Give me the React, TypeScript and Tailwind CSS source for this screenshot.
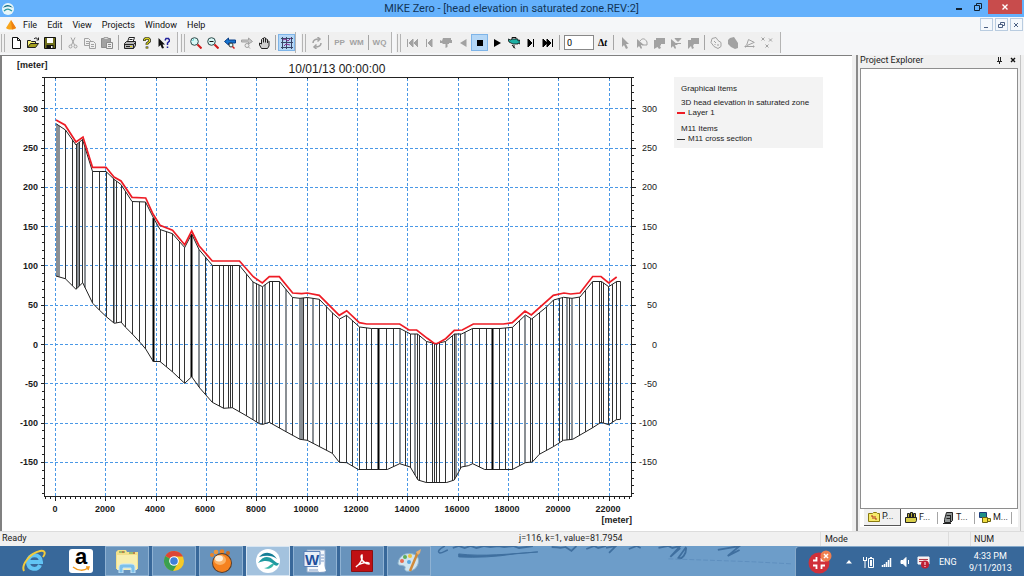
import React from 'react';
import clsx from 'clsx';

type Point = [number, number];

const LAYER_LINE: Point[] = [
  [56, 120], [65, 125], [76, 142], [83, 137], [92.5, 167.3], [106, 167.3], [114, 177], [121, 181], [132, 197.3],
  [145.7, 198], [153, 214], [160, 225.3], [172.5, 230.3], [184.7, 244.7], [191.7, 231], [199, 245.7], [212.3, 261],
  [239.5, 261], [253.3, 276.7], [262.3, 283], [269.3, 276.7], [279.3, 276.7], [292.7, 293], [301.7, 293.7],
  [307.3, 293], [319.3, 295.3], [339.3, 315.3], [346.7, 310.7], [359.3, 322.7], [366.7, 324], [399.7, 324],
  [409, 330], [416.7, 330], [427.3, 338.3], [434.3, 343.5], [437.3, 343.5], [445.7, 338.7], [454.3, 330.3],
  [462.3, 330], [473.3, 324], [503.3, 324], [512.3, 322.7], [525, 311], [531.3, 315], [553.3, 295.3], [564, 293],
  [570.7, 294], [580, 293], [592.7, 276.5], [601, 276.5], [608.7, 283], [616.7, 277],
];

const SECTION_TOP: Point[] = [
  [56, 123.7], [65.5, 130], [76, 145], [82.5, 139.5], [92.5, 171.5], [106, 171.5], [114.3, 179.5], [121, 184.5],
  [132, 201.5], [145.5, 202], [153.5, 218], [160, 229.5], [172.5, 233.7], [184.7, 247.5], [191.7, 234], [199, 249.5],
  [212.5, 265.5], [239.5, 265.5], [253, 282], [262.5, 286.7], [269.5, 281.5], [279.5, 281.5], [292.5, 297.5],
  [300, 298.3], [307.3, 297.5], [319.3, 299.3], [332.5, 313], [339.5, 319], [346.5, 315.3], [359.5, 327],
  [371.5, 328.5], [400, 328.5], [410.5, 334], [417.5, 334], [426.5, 341.5], [435.5, 343.7], [445.5, 341.5],
  [454.5, 334], [461.5, 334], [472.5, 328.5], [500, 328.5], [512.5, 327.3], [525.5, 315], [531.7, 319], [546.5, 307],
  [553.5, 300], [563.5, 297.3], [572, 298.3], [580, 297], [592.7, 281.5], [601.5, 281.5], [608.7, 286.7],
  [616.7, 281.5], [620.5, 281.5],
];

const SECTION_BOTTOM: Point[] = [
  [56, 276], [65.3, 278.7], [76, 289.3], [82.7, 282.7], [92.7, 303.3], [99.3, 310], [106.3, 316.7], [114.3, 323.3],
  [121, 322], [125.3, 327], [132, 333.7], [140, 342.3], [145.7, 349], [153.3, 361.5], [160, 361.5], [172.3, 371.7],
  [184.7, 383.3], [191.7, 376.7], [200, 388.3], [212.3, 402.3], [223.7, 408.3], [232.3, 407.7], [246.3, 415.7],
  [260, 424], [263, 424.3], [269.3, 422.3], [286, 431.7], [300, 439.3], [307.3, 440.3], [332.3, 453.3],
  [339.3, 462.3], [346.7, 462.7], [358.3, 469.5], [387.3, 469.5], [399.7, 463.7], [410.3, 467], [418, 480],
  [426.3, 482.5], [446.7, 482.5], [454.3, 480], [461.3, 467], [468.3, 465.7], [472.7, 463.7], [484.7, 469.5],
  [512.3, 469.5], [525.3, 462.7], [532.3, 462], [539.3, 454.3], [553.3, 446.7], [563.3, 440.3], [572.7, 439.3],
  [592.7, 427.7], [601, 422.3], [608.7, 424.7], [616.3, 419.7], [620.5, 419.3],
];

const THIN = [
  65.5, 72.5, 76.5, 79.5, 82.5, 92.5, 99.5, 106.5, 113.5, 116.5, 121.5, 125.5, 132.5, 139.5, 145.5, 160.5, 166.5,
  172.5, 179.5, 184.5, 205.5, 212.5, 219.5, 223.5, 228.5, 230.5, 232.5, 239.5, 246.5, 256.5, 262.5, 269.5, 272.5,
  279.5, 292.5, 303.5, 307.5, 319.5, 326.5, 332.5, 339.5, 346.5, 352.5, 359.5, 366.5, 371.5, 386.5, 393.5, 405.5,
  410.5, 417.5, 419.5, 426.5, 432.5, 434.5, 436.5, 439.5, 445.5, 452.5, 454.5, 460.5, 472.5, 479.5, 486.5, 499.5,
  505.5, 512.5, 519.5, 530.5, 532.5, 539.5, 546.5, 553.5, 559.5, 562.5, 569.5, 579.5, 585.5, 592.5, 599.5, 601.5,
  603.5, 608.5, 612.5, 616.5, 620.5,
];
const SOFT = [57, 59, 78, 85, 114, 199, 253, 259, 265, 286, 300, 302, 313, 400, 415, 456, 465, 525, 567, 572];
const THICK = [153.5, 191.5, 378.5, 492.5];

const X_VALUES = [0, 2000, 4000, 6000, 8000, 10000, 12000, 14000, 16000, 18000, 20000, 22000];
const Y_VALUES = [300, 250, 200, 150, 100, 50, 0, -50, -100, -150];

const toX = (v: number) => 55.5 + v * 0.02516;
const toY = (v: number) => 344.5 - v * 0.786;
const snap = (n: number) => Math.floor(n) + 0.5;

const heightAt = (line: Point[], x: number) => {
  const i = Math.max(1, line.findIndex((p) => p[0] >= x));
  const [x0, y0] = line[i - 1];
  const [x1, y1] = line[i];
  return y0 + ((x - x0) / (x1 - x0)) * (y1 - y0);
};

const toPoints = (line: Point[]) => line.map((p) => p.join(',')).join(' ');

const bars = (xs: number[]) =>
  xs.map((x) => `M${x} ${heightAt(SECTION_TOP, x)}V${heightAt(SECTION_BOTTOM, x)}`).join('');

const Chart: React.FC = () => {
  const minorX = Array.from({ length: 117 }, (_, i) => -400 + i * 200).filter((v) => toX(v) < 631);
  const minorY = Array.from({ length: 53 }, (_, i) => 330 - i * 10).filter((v) => toY(v) < 496);
  return (
    <svg
      viewBox="2 56 664 474"
      className="h-auto w-full font-['Liberation_Sans',Arial,sans-serif]"
      role="img"
      aria-label="Head elevation in saturated zone"
    >
      <g stroke="#4a98e6" strokeDasharray="3 2">
        {X_VALUES.map((v) => (
          <path key={v} d={`M${snap(toX(v))} 78V496`} />
        ))}
        {Y_VALUES.map((v) => (
          <path key={v} d={`M45 ${snap(toY(v))}H631`} />
        ))}
      </g>

      <path d={bars(SOFT)} stroke="#8a8f94" strokeWidth="2" />
      <path d={bars(THIN)} stroke="#333" />
      <path d={bars(THICK)} stroke="#000" strokeWidth="2" />
      <polyline points={toPoints(SECTION_TOP)} fill="none" stroke="#222" />
      <polyline points={toPoints(SECTION_BOTTOM)} fill="none" stroke="#222" />
      <polyline points={toPoints(LAYER_LINE)} fill="none" stroke="#ee1c25" strokeWidth="1.7" />

      <g stroke="#222">
        <path d="M42 77.5H634M44.5 77V497M631.5 77V497M44 496.5H632" />
        <path d={minorY.map((v) => `M42 ${snap(toY(v))}h2M632 ${snap(toY(v))}h2`).join('')} />
        <path d={Y_VALUES.map((v) => `M41 ${snap(toY(v))}h4M632 ${snap(toY(v))}h4`).join('')} />
        <path d={minorX.map((v) => `M${snap(toX(v))} 497v2`).join('')} />
        <path d={X_VALUES.map((v) => `M${snap(toX(v))} 497v4M${snap(toX(v))} 78v1`).join('')} />
      </g>

      <g fontSize="9" fill="#1a1a1a">
        <g fontWeight="bold">
          <text x="17" y="68">[meter]</text>
          <text x="632" y="523" textAnchor="end">[meter]</text>
          {Y_VALUES.map((v) => (
            <text key={v} x="38" y={Math.round(toY(v)) + 3} textAnchor="end">{v}</text>
          ))}
          {X_VALUES.map((v) => (
            <text key={v} x={Math.round(toX(v)) - 1} y="512" textAnchor="middle">{v}</text>
          ))}
        </g>
        {Y_VALUES.map((v) => (
          <text key={v} x="657" y={Math.round(toY(v)) + 3} textAnchor="end">{v}</text>
        ))}
      </g>
      <text x="337" y="73" fontSize="12" fill="#1a1a1a" textAnchor="middle">10/01/13 00:00:00</text>
    </svg>
  );
};

const Legend: React.FC = () => (
  <div className="mt-[21px] mr-[29px] ml-2 h-[71px] w-[149px] shrink-0 bg-[#f3f3f3] pt-[7px] pl-[7px] font-['Liberation_Sans',Arial,sans-serif] text-[8px] leading-[10px] whitespace-nowrap text-[#222]">
    <p>Graphical Items</p>
    <p className="mt-1">3D head elevation in saturated zone</p>
    <p className="-ml-1 flex items-center gap-[3px]">
      <span className="h-[2px] w-2 bg-[#ee1c25]" />
      Layer 1
    </p>
    <p className="mt-1.5">M11 Items</p>
    <p className="-ml-1 flex items-center gap-[3px]">
      <span className="h-px w-2 bg-[#333]" />
      M11 cross section
    </p>
  </div>
);

const G = '#a2a2a2';

const ICONS: Record<string, React.ReactNode> = {
  New: <path d="M2.5.5h5l3 3v8h-8zM7.500.5v3h3" fill="#fff" stroke="#111" />,
  Open: (
    <>
      <path d="M.5 10.500v-7h3l1 1h4v2" fill="#f4ef7a" stroke="#222" />
      <path d="M.5 10.500l3-4h8l-3 4z" fill="#a5a020" stroke="#222" />
      <path d="M7 2c1-1.500 3-1.500 4 .5M11.500.5v2.500h-2" fill="none" stroke="#222" />
    </>
  ),
  Save: (
    <>
      <path d="M.5.5h11v11h-11z" fill="#70701c" stroke="#111" />
      <path d="M3 1h6v5H3z" fill="#fff" />
      <path d="M2.500 8h7v3.500h-7z" fill="#111" />
      <path d="M7 9h1.500v2H7z" fill="#fff" />
    </>
  ),
  Cut: (
    <g fill="none" stroke={G}>
      <path d="M4 .5l3.500 7.500M8 .5L4.500 8" />
      <circle cx="3.500" cy="9.500" r="1.500" />
      <circle cx="8.500" cy="9.500" r="1.500" />
    </g>
  ),
  Copy: (
    <g fill="#f0f0f0" stroke={G}>
      <path d="M.5 1.500h4l2 2v5h-6zM2 4.500h3M2 6.500h3" />
      <path d="M5.500 4.500h4l2 2v5h-6zM7 7.500h3M7 9.500h3" />
    </g>
  ),
  Paste: (
    <g>
      <path d="M.5 1.500h9v9h-9z" fill={G} stroke="#8d8d8d" />
      <path d="M3 .5h4v2H3z" fill="#ddd" stroke={G} />
      <path d="M5.500 5.500h6v6h-6zM7 7.500h3M7 9.500h3" fill="#eee" stroke="#8d8d8d" />
    </g>
  ),
  Print: (
    <g stroke="#222">
      <path d="M3.500 5l1.500-4.500h5.500L9 5" fill="#fff" />
      <path d="M.5 6.500l2-2h9v4l-2 3h-9z" fill="#b5b5b5" />
      <path d="M.5 7.500h9l2-2M9.500 7.500v4M5.500 2.500h3M2 9.500h4" fill="none" />
      <path d="M6 9.500h2" stroke="#d8d000" />
    </g>
  ),
  Help: (
    <g fill="none">
      <path d="M3.500 4V2.500l1-1h3l1 1v2l-2.500 2V8M6 9.500v2" stroke="#111" strokeWidth="2.600" />
      <path d="M3.500 3.500v-1l1-1h3l1 1v2L6 6.500V8M6 10v1.500" stroke="#d9d420" strokeWidth="1.3" />
    </g>
  ),
  'What is this': (
    <g>
      <path d="M.5 1v9l2-2 1.500 3.500L6 11 4.500 7.500H7z" fill="#111" />
      <path d="M7 3.500l1-2h2.500l1 1.500v1L9.500 6v2M9.500 9.500v1.500" fill="none" stroke="#22229a" strokeWidth="1.500" />
    </g>
  ),
  'Zoom in': (
    <g>
      <circle cx="4.500" cy="4.500" r="3.800" fill="#d9f8f6" stroke="#2c4a4a" />
      <path d="M2.500 3.500l1.500-1" stroke="#29c7c7" />
      <path d="M7.500 7.500l4 4" stroke="#d01a1a" strokeWidth="2" />
    </g>
  ),
  'Zoom out': (
    <g>
      <circle cx="4.500" cy="4.500" r="3.800" fill="#d9f8f6" stroke="#2c4a4a" />
      <path d="M2.500 4.500h4" stroke="#111" />
      <path d="M7.500 7.500l4 4" stroke="#d01a1a" strokeWidth="2" />
    </g>
  ),
  'Previous zoom': (
    <g>
      <path d="M.5 4.500L4.500 1v2h7v3h-7v2z" fill="#1675d0" stroke="#0b3f86" />
      <circle cx="7" cy="8" r="2" fill="#dff" stroke="#333" />
      <path d="M8.500 9.500l2 2" stroke="#d01a1a" strokeWidth="1.500" />
    </g>
  ),
  'Next zoom': (
    <g stroke={G}>
      <path d="M11.500 4.500L7.500 1v2h-7v2h7v2z" fill="#c8c8c8" />
      <circle cx="6" cy="8.500" r="2" fill="#eee" />
      <path d="M7.500 10l1.500 1.500" />
    </g>
  ),
  Pan: (
    <path
      d="M3.500 11.500L1.500 8V6l2 1V2.500l1-1 1 1V1l1-.5 1 .5v1.500l1-.5 1 .5v1.500l1 0 .5.500V9l-1.500 2.500zM5.500 2v3.500M7.500 2v3.500M9.500 3.500v2.500"
      fill="#d0d0d0"
      stroke="#222"
    />
  ),
  Grid: (
    <g fill="none">
      <path d="M1.500 0v12M5.500 0v12M10.500 0v12M0 1.500h12M0 5.500h12M0 10.500h12" stroke="#3a4668" />
      <path d="M2 3l2-1 3 2 3-3M3 9l2-2 4 1" stroke="#8a2d90" />
    </g>
  ),
  Refresh: (
    <g fill="none" stroke={G} strokeWidth="1.500">
      <path d="M2 6c0-3 2-4 6-4M10 6c0 3-2 4-6 4" />
      <path d="M6.500 0L9 2 6.500 4.500M5.500 7.500L3 10l2.500 2" />
    </g>
  ),
  First: <path d="M1.500 2v8M7 2L3 6l4 4zM12 2L8 6l4 4z" fill={G} stroke={G} />,
  'Step back': <path d="M3.500 2v8M9 2L5 6l4 4z" fill={G} stroke={G} />,
  'Reverse record': <path d="M0 3l2 1 1-3h8v2h1v3H9v1H7.500v3l-2 1V7H3L2 6H0z" fill={G} />,
  Back: <path d="M9.500 2v8L3 6z" fill={G} />,
  Stop: <path d="M3 3h6v6H3z" fill="#000" />,
  Play: <path d="M3 2v8l7-4z" fill="#000" />,
  Record: (
    <g>
      <path d="M0 2l3 1 1-1h6v2l2-1v4l-2-1v1H5L3 6 1 5z" fill="#1fb0a4" stroke="#111" strokeWidth=".8" />
      <path d="M4 2V.5h4V2M6 8v3M4 8l3 3.500" fill="none" stroke="#111" />
    </g>
  ),
  Step: <path d="M8.500 2v8M3 2l4 4-4 4z" fill="#000" stroke="#000" />,
  Last: <path d="M10.500 2v8M1 2l4 4-4 4zM5 2l4 4-4 4z" fill="#000" stroke="#000" />,
  Select: <path d="M3 0v10l2-2 2 4 2-1-2-4h3z" fill={G} />,
  'Select shape': (
    <g>
      <path d="M1 2v9l2-2 2 3 1-1-1-3h3z" fill={G} />
      <path d="M4 4c2-3 5-3 7 1l0 3H6" fill="none" stroke={G} />
    </g>
  ),
  'Select area': <path d="M3 1h9v6H8v1L7 9l1 2-2 1-1.500-2L1 12V3h2z" fill={G} />,
  'Select below': (
    <g>
      <path d="M1 2v9l2-2 2 3 1-1-1-3h3z" fill={G} />
      <path d="M5 1.500h6l-3 3zM6 6.500h5" fill={G} stroke={G} />
    </g>
  ),
  'Select block': <path d="M4 1h8v6H7l-1 2 1 2-2 1-1-3-3 3V3h3z" fill={G} />,
  Polygon: (
    <g fill="none" stroke={G}>
      <path d="M2 1.500l4-1 2 3 3 2v4l-3 2-4-2-3-4zM4 4l2 2M7 8h2M4.500 7.500h1" />
    </g>
  ),
  'Fill polygon': <path d="M3 1l4-1 2 3 2 3v5l-3 1-4-2-3-3V3z" fill={G} />,
  'Edit line': (
    <g fill="none" stroke={G}>
      <path d="M1.500 9.500h8M2.500 8.500l2-6M4.500 2.500l6 3M3 8.500l7-3" />
      <path d="M1 9h1v1H1zM9 9h1v1H9z" fill={G} />
    </g>
  ),
  'Delete points': <path d="M.5.5l3 3m0-3l-3 3M8 1.500l3 3m0-3l-3 3M4.500 7.500l3 3m0-3l-3 3" stroke={G} fill="none" />,
};

const Tool: React.FC<{ name: string; active?: boolean }> = ({ name, active }) => (
  <button
    aria-label={name}
    className={clsx(
      'flex h-[17px] w-[17px] shrink-0 items-center justify-center',
      active && 'border border-[#7eb4e8] bg-[#b5d7f6]'
    )}
  >
    <svg viewBox="0 0 12 12" className="h-3 w-3 shrink-0">{ICONS[name]}</svg>
  </button>
);

const ModeTool: React.FC<{ label: string }> = ({ label }) => (
  <button className="w-[17px] shrink-0 text-center font-['Liberation_Sans',sans-serif] text-[8px] font-bold text-[#a2a2a2]">
    {label}
  </button>
);

const Sep = () => (
  <span className="flex w-[6px] shrink-0 justify-center">
    <span className="h-[15px] w-px bg-[#a5a5a5]" />
  </span>
);

const Band: React.FC<{ className?: string; children: React.ReactNode }> = ({ className, children }) => (
  <div className={clsx('flex h-[21px] shrink-0 items-center border-r border-[#b4b4b4] bg-[#f0f0f0]', className)}>
    <span className="mr-0.5 ml-px h-[18px] w-1 shrink-0 border-x border-[#b4b4b4]" />
    {children}
  </div>
);

const tools = (names: string[]) => names.map((n) => <Tool key={n} name={n} />);

const TitleBar: React.FC = () => (
  <header className="flex h-[17px] items-start bg-[#64b1fc]">
    <svg viewBox="0 0 12 12" className="mt-[3px] ml-0.5 h-3 w-3">
      <circle cx="6" cy="6" r="6" fill="#e8f6f8" />
      <path d="M1 5c2-4 7-4 10 0-4-2-6-2-10 0z" fill="#146f86" />
      <path d="M2 8c3-3 5-2 8 0" fill="none" stroke="#2a9aa0" strokeWidth="1.200" />
    </svg>
    <h1 className="flex-1 pl-[60px] text-center text-[11px] leading-[17px] text-[#123456]">
      MIKE Zero - [head elevation in saturated zone.REV:2]
    </h1>
    <button aria-label="Minimize" className="flex h-[14px] w-[19px] items-center justify-center">
      <span className="mt-1 h-0.5 w-1.5 bg-[#123]" />
    </button>
    <button aria-label="Restore" className="flex h-[14px] w-[20px] items-center justify-center">
      <svg viewBox="0 0 8 8" className="h-2 w-2" fill="none" stroke="#123">
        <path d="M2.500 2V.500h5v5H6M.5 2.500h5v5h-5z" />
      </svg>
    </button>
    <button aria-label="Close" className="mr-0.5 flex h-[14px] w-[34px] items-center justify-center bg-[#c84c4c]">
      <svg viewBox="0 0 6 6" className="h-1.5 w-1.5" stroke="#fff" strokeWidth="1.400">
        <path d="M.5.5l5 5m0-5l-5 5" />
      </svg>
    </button>
  </header>
);

const MENUS = ['File', 'Edit', 'View', 'Projects', 'Window', 'Help'];
const WINDOW_BUTTONS = [
  { name: 'Minimize document', d: 'M1 5.500h4' },
  { name: 'Restore document', d: 'M2.500 2V.500h4v3H5M.5 2.500h4v3h-4z' },
  { name: 'Close document', d: 'M1 1l4 4m0-4l-4 4' },
];

const MenuBar: React.FC = () => (
  <nav className="flex h-[15px] items-center bg-[#f5f7f9] text-[9px] leading-[12px] text-[#111]">
    <svg viewBox="0 0 10 10" className="mr-[7px] ml-1.5 h-2.5 w-2.5">
      <path d="M5 0l5 8c-2 2-8 2-10 0z" fill="#f7a51c" />
      <path d="M5 0l5 8-4 1.500z" fill="#ee7f10" />
    </svg>
    <div className="flex flex-1 gap-[10px]">
      {MENUS.map((m) => (
        <button key={m}>{m}</button>
      ))}
    </div>
    <div className="flex gap-0.5 pr-px">
      {WINDOW_BUTTONS.map((b) => (
        <button
          key={b.name}
          aria-label={b.name}
          className="flex h-[13px] w-[13px] items-center justify-center border border-[#b9cce0] bg-[#f4f8fc]"
        >
          <svg viewBox="0 0 7 6" className="h-1.5 w-[7px]" fill="none" stroke="#4a5f82">
            <path d={b.d} />
          </svg>
        </button>
      ))}
    </div>
  </nav>
);

const Toolbar: React.FC = () => (
  <div className="flex h-[23px] items-start overflow-hidden bg-[#f5f6f8]">
    <Band className="mr-[2px] pr-[5px]">
      {tools(['New', 'Open', 'Save'])}
      <Sep />
      {tools(['Cut', 'Copy', 'Paste'])}
      <Sep />
      {tools(['Print', 'Help', 'What is this'])}
    </Band>
    <Band className="mr-[5px]">
      {tools(['Zoom in', 'Zoom out', 'Previous zoom', 'Next zoom', 'Pan'])}
      <Sep />
      <Tool name="Grid" active />
    </Band>
    <Band className="mr-[4px] pr-[3px]">
      <Tool name="Refresh" />
      <Sep />
      <ModeTool label="PP" />
      <ModeTool label="WM" />
      <Sep />
      <ModeTool label="WQ" />
    </Band>
    <Band className="pr-[5px]">
      {tools(['First', 'Step back', 'Reverse record', 'Back'])}
      <Tool name="Stop" active />
      {tools(['Play', 'Record', 'Step', 'Last'])}
      <Sep />
      <input
        aria-label="Time step"
        defaultValue="0"
        className="mr-px ml-0.5 h-[15px] w-[30px] border border-[#888] bg-white px-0.5 text-[9px] leading-none"
      />
      <button className="w-[15px] shrink-0 text-center font-['Liberation_Serif',serif] text-[10px] font-bold text-black">
        Δ<i>t</i>
      </button>
      <Sep />
      {tools(['Select', 'Select shape', 'Select area', 'Select below', 'Select block'])}
      <Sep />
      {tools(['Polygon', 'Fill polygon', 'Edit line', 'Delete points'])}
    </Band>
  </div>
);

const EXPLORER_TABS = [
  {
    label: 'P...',
    icon: (
      <g>
        <path d="M.5 2.500h4l1-1h3l1 1h2v8H.500z" fill="#f6ea6a" stroke="#8a7a10" />
        <path d="M3 5h2v3M7 5v3h2" fill="none" stroke="#b03020" />
      </g>
    ),
  },
  {
    label: 'F...',
    icon: (
      <g stroke="#222">
        <path d="M2.500 5.500v-4h2v4M5.500 5.500v-5h2v5M8.500 5.500v-4h2v4" fill="#b9ae3a" />
        <path d="M.5 5.500h11v3l-1 2H.500z" fill="#d9cf4a" />
      </g>
    ),
  },
  {
    label: 'T...',
    icon: (
      <g stroke="#222">
        <path d="M4.500.5h6v8l-2 2h-6v-3z" fill="#8f9494" />
        <path d="M4.500 3.500h4M4.500 6.500h4M1 11.500h8M8.500 3v7" fill="none" />
      </g>
    ),
  },
  {
    label: 'M...',
    icon: (
      <g>
        <path d="M.5.5h7v5h-7z" fill="#1f8f86" stroke="#1b3a7a" />
        <path d="M3.500 5.500h5v5h-5zM8.500 6.500h3v3h-3" fill="#f0dc3c" stroke="#6d6410" />
      </g>
    ),
  },
];

const ProjectExplorer: React.FC = () => (
  <aside className="flex w-[165px] shrink-0 flex-col border-r border-l-2 border-r-[#c4c4c4] border-l-[#8a8a8a] bg-[#f0f0f0]">
    <div className="flex h-[10px] items-center pl-0.5 text-[9px] leading-[10px] text-[#222]">
      <h2 className="flex-1">Project Explorer</h2>
      <button aria-label="Pin" className="mr-2">
        <svg viewBox="0 0 5 7" className="h-[7px] w-[5px]" stroke="#222" fill="none">
          <path d="M1.500 0v4M3.500 0v4M0 4.500h5M2.500 5v2" />
        </svg>
      </button>
      <button aria-label="Close panel" className="mr-1">
        <svg viewBox="0 0 6 6" className="h-1.5 w-1.5" stroke="#111" strokeWidth="1.400">
          <path d="M1 1l4 4m0-4l-4 4" />
        </svg>
      </button>
    </div>
    <div className="mx-0.5 mt-[3px] flex-1 border border-[#8e8e8e] bg-white" />
    <div className="mx-0.5 mb-1 flex h-[18px] bg-white pl-1 text-[9px] text-[#222]" role="tablist">
      {EXPLORER_TABS.map((tab, i) => (
        <button
          key={tab.label}
          role="tab"
          aria-selected={i === 0}
          className={clsx(
            'flex h-[17px] w-[37px] items-center gap-0.5 pl-1',
            i === 0 ? 'border-r border-b border-[#555] bg-[#f0f0f0]' : 'relative after:absolute after:right-0 after:h-3 after:w-px after:bg-[#a5a5a5]'
          )}
        >
          <svg viewBox="0 0 12 12" className="h-3 w-3 shrink-0">{tab.icon}</svg>
          {tab.label}
        </button>
      ))}
    </div>
  </aside>
);

const StatusBar: React.FC = () => (
  <footer className="flex h-[15px] items-center border-t border-[#dcdcdc] bg-[#f0f0f0] text-[9px] text-[#222]">
    <span className="w-[519px] pl-0.5">Ready</span>
    <span className="flex-1">j=116, k=1, value=81.7954</span>
    <span className="h-full w-[128px] border-l border-[#dcdcdc] pl-1 leading-[14px]">Mode</span>
    <span className="h-full w-[22px] border-l border-[#dcdcdc]" />
    <span className="h-full w-[54px] border-l border-[#dcdcdc] pl-[3px] leading-[14px]">NUM</span>
  </footer>
);

const APPS = [
  {
    name: 'File Explorer',
    icon: (
      <g>
        <path d="M1 3l2-2h8l1 2h11v17H1z" fill="#f3e08a" />
        <path d="M2 6h20v15H2z" fill="#f8efb0" />
        <path d="M4 3h6M14 4h6" stroke="#4a9a50" />
        <path d="M7 3h2M18 4h2" stroke="#d04a30" />
        <path d="M4 24v-6c0-2 2-3 4-3h8c2 0 4 1 4 3v6h-4v-5H8v5z" fill="#7cc0ea" stroke="#c8e6f8" />
      </g>
    ),
  },
  {
    name: 'Chrome',
    icon: (
      <g>
        <circle cx="12" cy="12" r="10" fill="#f6c927" />
        <path d="M12 12L3.300 7A10 10 0 0 1 21 7.500h-9z" fill="#dd4535" />
        <path d="M12 12l-8.700-5A10 10 0 0 0 11 22l5-8z" fill="#3aa050" />
        <circle cx="12" cy="12" r="4.800" fill="#fff" />
        <circle cx="12" cy="12" r="3.800" fill="#4080d8" />
      </g>
    ),
  },
  {
    name: 'GOM Player',
    icon: (
      <g>
        <circle cx="3" cy="6" r="2" fill="#e8842a" />
        <circle cx="7" cy="3" r="2.300" fill="#f0983a" />
        <circle cx="13" cy="2.500" r="2.300" fill="#e8842a" />
        <circle cx="19" cy="4" r="2" fill="#c96a20" />
        <circle cx="13" cy="14" r="10" fill="#5a3d28" />
        <circle cx="13" cy="14" r="9" fill="#f58220" />
        <ellipse cx="11" cy="11" rx="6" ry="5" fill="#fbb368" />
        <ellipse cx="10" cy="9.500" rx="4" ry="3" fill="#fff0dc" />
      </g>
    ),
  },
  {
    name: 'MIKE Zero',
    icon: (
      <g>
        <circle cx="12" cy="12" r="12" fill="#fff" />
        <path d="M3 8c5-6 13-6 18 2-5-4-11-4-18-2z" fill="#157e96" />
        <path d="M2 14c5-7 10-7 14-4 3 2 5 5 7 4-1 4-4 3-7 0-3-2-7-3-14 0z" fill="#1f9aa0" />
        <path d="M8 19c6 0 6-5 10-4-1 4-6 6-10 4z" fill="#38b6a8" />
      </g>
    ),
  },
  {
    name: 'Word',
    icon: (
      <g>
        <path d="M4 1h18v22H4z" fill="#f5f8fc" stroke="#8fa8c8" />
        <path d="M18 6h3M18 9h3M18 12h3M6 21h9" stroke="#7f9cc8" />
        <path d="M1 2.500h16v15H1z" fill="#e8eff8" stroke="#5a80b8" />
        <text x="9" y="15.500" fontSize="15" fontWeight="bold" fill="#1f4f9c" textAnchor="middle">W</text>
        <path d="M15 17l5-3 3 8-7 1z" fill="#fff" />
      </g>
    ),
  },
  {
    name: 'Adobe Reader',
    icon: (
      <g>
        <path d="M1.500 1.500h21v21h-21z" fill="#c01014" stroke="#8a1012" />
        <path d="M6 18c5-4 7-8 6-12-2 0-1 8 7 9 1-3-10-1-13 3z" fill="none" stroke="#fff" strokeWidth="1.500" />
      </g>
    ),
  },
  {
    name: 'Paint',
    icon: (
      <g>
        <path d="M1 14C2 6 10 3 16 5c6 2 6 6 5 10-2 6-8 8-12 7-3-2 1-4-2-5s-6 0-6-3z" fill="#cfe4f0" stroke="#8fb4cc" />
        <circle cx="5" cy="12" r="2" fill="#e86a50" />
        <circle cx="8" cy="8" r="2" fill="#5fae5a" />
        <circle cx="13" cy="7" r="2" fill="#edc440" />
        <circle cx="12" cy="13" r="2" fill="#58a8e0" />
        <path d="M13 22L21 3" stroke="#cf8a3a" strokeWidth="2.500" />
        <path d="M19 3l5-3-1 4-2 2z" fill="#e8b070" />
      </g>
    ),
  },
];

const Taskbar: React.FC = () => (
  <div className="flex h-[30px] items-stretch bg-[#6d9dc9]">
    <div className="flex w-[105px] items-center bg-[#38689a] pl-[22px]">
      <button aria-label="Internet Explorer">
        <svg viewBox="0 0 24 24" className="h-6 w-6" fill="none">
          <path d="M5 13h14c0-9-13-9-13 0 0 8 10 9 12 3" stroke="#62c4f4" strokeWidth="4" />
          <path d="M2 22C-1 16 8 4 18 2c5-1 6 2 3 6" stroke="#f2cb3c" strokeWidth="2" />
        </svg>
      </button>
      <button
        aria-label="Amazon"
        className="ml-[23px] flex h-6 w-6 flex-col items-center rounded-[3px] bg-white font-['Liberation_Sans',sans-serif] text-[22px] leading-[15px] font-bold text-black"
      >
        <span>a</span>
        <svg viewBox="0 0 18 6" className="mt-0.5 h-1.5 w-[18px]" fill="none" stroke="#f49a1c" strokeWidth="1.500">
          <path d="M1 1c5 4 11 4 15 1M14 1l3 0-1 3" />
        </svg>
      </button>
    </div>
    <div className="flex gap-[3px] bg-[#38689a]">
      {APPS.map((app) => (
        <button
          key={app.name}
          aria-label={app.name}
          className={clsx(
            'flex w-[44px] items-center justify-center border',
            app.name === 'MIKE Zero' ? 'border-[#d7e5f2] bg-[#a3c2de]' : 'border-[#8fb2d3] bg-[#6893bc]'
          )}
        >
          <svg viewBox="0 0 24 24" className="h-6 w-6 font-['Liberation_Sans',sans-serif]">{app.icon}</svg>
        </button>
      ))}
    </div>
    <div className="min-w-0 flex-1 overflow-hidden">
      <svg viewBox="0 0 368 30" className="h-auto w-full" fill="none" stroke="#3f6f9f">
        <path d="M14 0c-6 3-8 6-5 7 3 0 5-2 8-3" strokeWidth="1.500" />
        <path d="M22 2l6-2 6 2 6-2 6 2 8-2 6 1 8-1 6 1 9-1 6 2 14-2M122 1c6 0 8 2 14 0l6 4 5-5M157 3l8-3 4 2 8-2M177 2l10-2-7 7M200 3l8-3 4 2M230 2l10-2 4 2 8-2-10 11 10-9M258 1l-8 11c4 2 8-4 8-10M290 4l22-4-12 10 12-6" strokeWidth="1.800" />
        <path d="M28 8c24 3 52 0 80-2l-24 2c-18 3-38 4-56 3z" fill="#3f6f9f" />
        <path d="M240 13c30 1 60 2 86 3l38 2" strokeDasharray="5 2" stroke="#5e8fbe" />
      </svg>
    </div>
    <div className="flex w-[229px] shrink-0 items-center rounded-tl border-t border-l border-[#86a9ca] bg-[#38689a] pl-[12px] text-[9px] leading-[12px] text-white">
      <svg viewBox="0 0 24 24" className="h-6 w-6 shrink-0">
        <circle cx="11" cy="13" r="10.500" fill="#d0303a" />
        <path d="M5 10.500h3.500V7M17 10.500h-3.500V8M5 15.500h3.500V19M17 15.500h-3.500V19" fill="none" stroke="#fff" strokeWidth="1.800" />
        <circle cx="18" cy="6" r="5.500" fill="#f08050" />
        <path d="M16 4l4 4m0-4l-4 4" stroke="#fff" strokeWidth="1.500" />
      </svg>
      <svg viewBox="0 0 6 4" className="mr-[10px] ml-[14px] h-1 w-1.5 shrink-0">
        <path d="M0 3.500L3 0l3 3.500z" fill="#fff" />
      </svg>
      <svg viewBox="0 0 74 14" className="h-[14px] w-[74px] shrink-0" fill="none" stroke="#fff">
        <path d="M1 5.500h4M1.500 2v3M4.500 2v3M3 6v7M6.500 3.500h5v9h-5zM8 2.500h2M8.500 5v6M9.500 5v6" />
        <path d="M20.500 12v-2M22.500 12V9M24.500 12V7M26.500 12V5M28.500 12V3" strokeWidth="1.500" />
        <path d="M39 5.500h2l3-3v9l-3-3h-2z" fill="#fff" />
        <path d="M46.500 5v4" />
        <path d="M56 2h11v7H56z" fill="#f4e7e7" />
        <path d="M57 4.500h9M57 6.500h4" stroke="#b03a4a" />
        <circle cx="63" cy="9.500" r="4" fill="#c01f35" stroke="none" />
        <path d="M63 7v3M63 11v1" />
      </svg>
      <span className="ml-[3px]">ENG</span>
      <time className="flex-1 text-center">
        4:33 PM
        <br />
        9/11/2013
      </time>
    </div>
  </div>
);

export default function App() {
  return (
    <div className="flex min-h-screen flex-col bg-[#f5f6f8] font-[Roboto,'Segoe_UI',sans-serif]">
      <TitleBar />
      <MenuBar />
      <Toolbar />
      <main className="flex flex-1 bg-[#f0f0f0]">
        <section className="flex min-w-0 flex-1 items-start border-t border-l-2 border-[#808080] bg-white">
          <div className="min-w-0 flex-1">
            <Chart />
          </div>
          <Legend />
        </section>
        <div className="w-1 shrink-0" />
        <ProjectExplorer />
        <div className="w-[3px] shrink-0" />
      </main>
      <StatusBar />
      <Taskbar />
    </div>
  );
}
